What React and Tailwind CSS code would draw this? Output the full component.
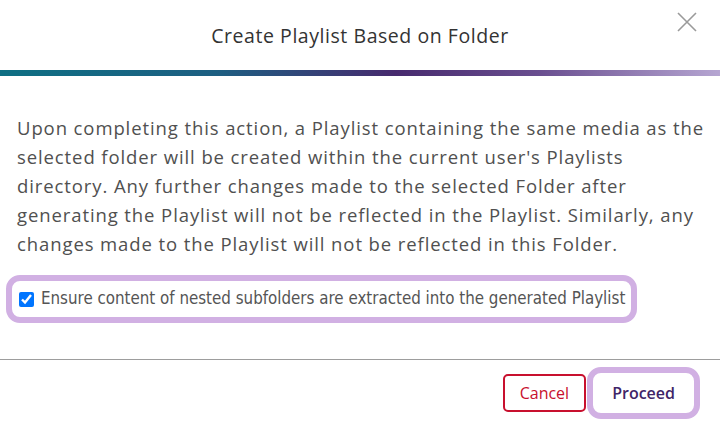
import React, { useState } from 'react';

const CloseIcon = () => (
  <svg width="22" height="22" viewBox="0 0 22 22" fill="none" stroke="#9a9a9a" strokeWidth="1.6">
    <path d="M2 2 L20 20 M20 2 L2 20" />
  </svg>
);

const lines = [
  'Upon completing this action, a Playlist containing the same media as the',
  "selected folder will be created within the current user's Playlists",
  'directory. Any further changes made to the selected Folder after',
  'generating the Playlist will not be reflected in the Playlist. Similarly, any',
  'changes made to the Playlist will not be reflected in this Folder.',
];

const App = () => {
  const [checked, setChecked] = useState(true);

  return (
    <div className="w-[720px] h-[425px] bg-white flex flex-col overflow-hidden font-['Open_Sans',sans-serif] text-[#444]">
      <div className="relative h-[70px] flex items-center justify-center">
        <h1 className="text-[19.5px] tracking-[0.55px] text-[#333] pt-[1px]">Create Playlist Based on Folder</h1>
        <button className="absolute right-[22px] top-[11px]">
          <CloseIcon />
        </button>
      </div>
      <div className="h-[6px] bg-[linear-gradient(to_right,#0e6f83_0%,#1d5f82_30%,#472a6e_55%,#6a4f90_75%,#b6a6d2_100%)]" />

      <div className="px-[17px] pt-[37px]">
        <p className="text-[18.5px] tracking-[0.9px] leading-[29px] text-[#505050]">
          {lines.map((l) => (
            <span key={l} className="block whitespace-nowrap">{l}</span>
          ))}
        </p>
      </div>

      <div className="pl-[6px] pt-[17px]">
        <label className="inline-flex items-center gap-[7px] border-[6px] border-[#d1b0e3] rounded-[14px] h-[48px] pl-[7px] pr-[6px] cursor-pointer">
          <input
            type="checkbox"
            checked={checked}
            onChange={() => setChecked(!checked)}
            className="w-[15px] h-[15px] accent-[#0075ff]"
          />
          <span className="text-[16.8px] text-[#555] font-['Liberation_Sans_Narrow','DejaVu_Sans_Condensed',sans-serif]">
            Ensure content of nested subfolders are extracted into the generated Playlist
          </span>
        </label>
      </div>

      <div className="mt-[36px] border-t border-[#9d9d9d]" />

      <div className="flex justify-end items-center gap-[1px] pr-[20px] pt-[7px]">
        <button className="h-[38px] px-[15px] border-2 border-[#c8102e] rounded-[5px] text-[16px] text-[#c8102e]">
          Cancel
        </button>
        <button className="h-[52px] px-[19px] border-[6px] border-[#d1b0e3] rounded-[14px] text-[16px] font-semibold text-[#3f2568]">
          Proceed
        </button>
      </div>
    </div>
  );
};

export default App;
